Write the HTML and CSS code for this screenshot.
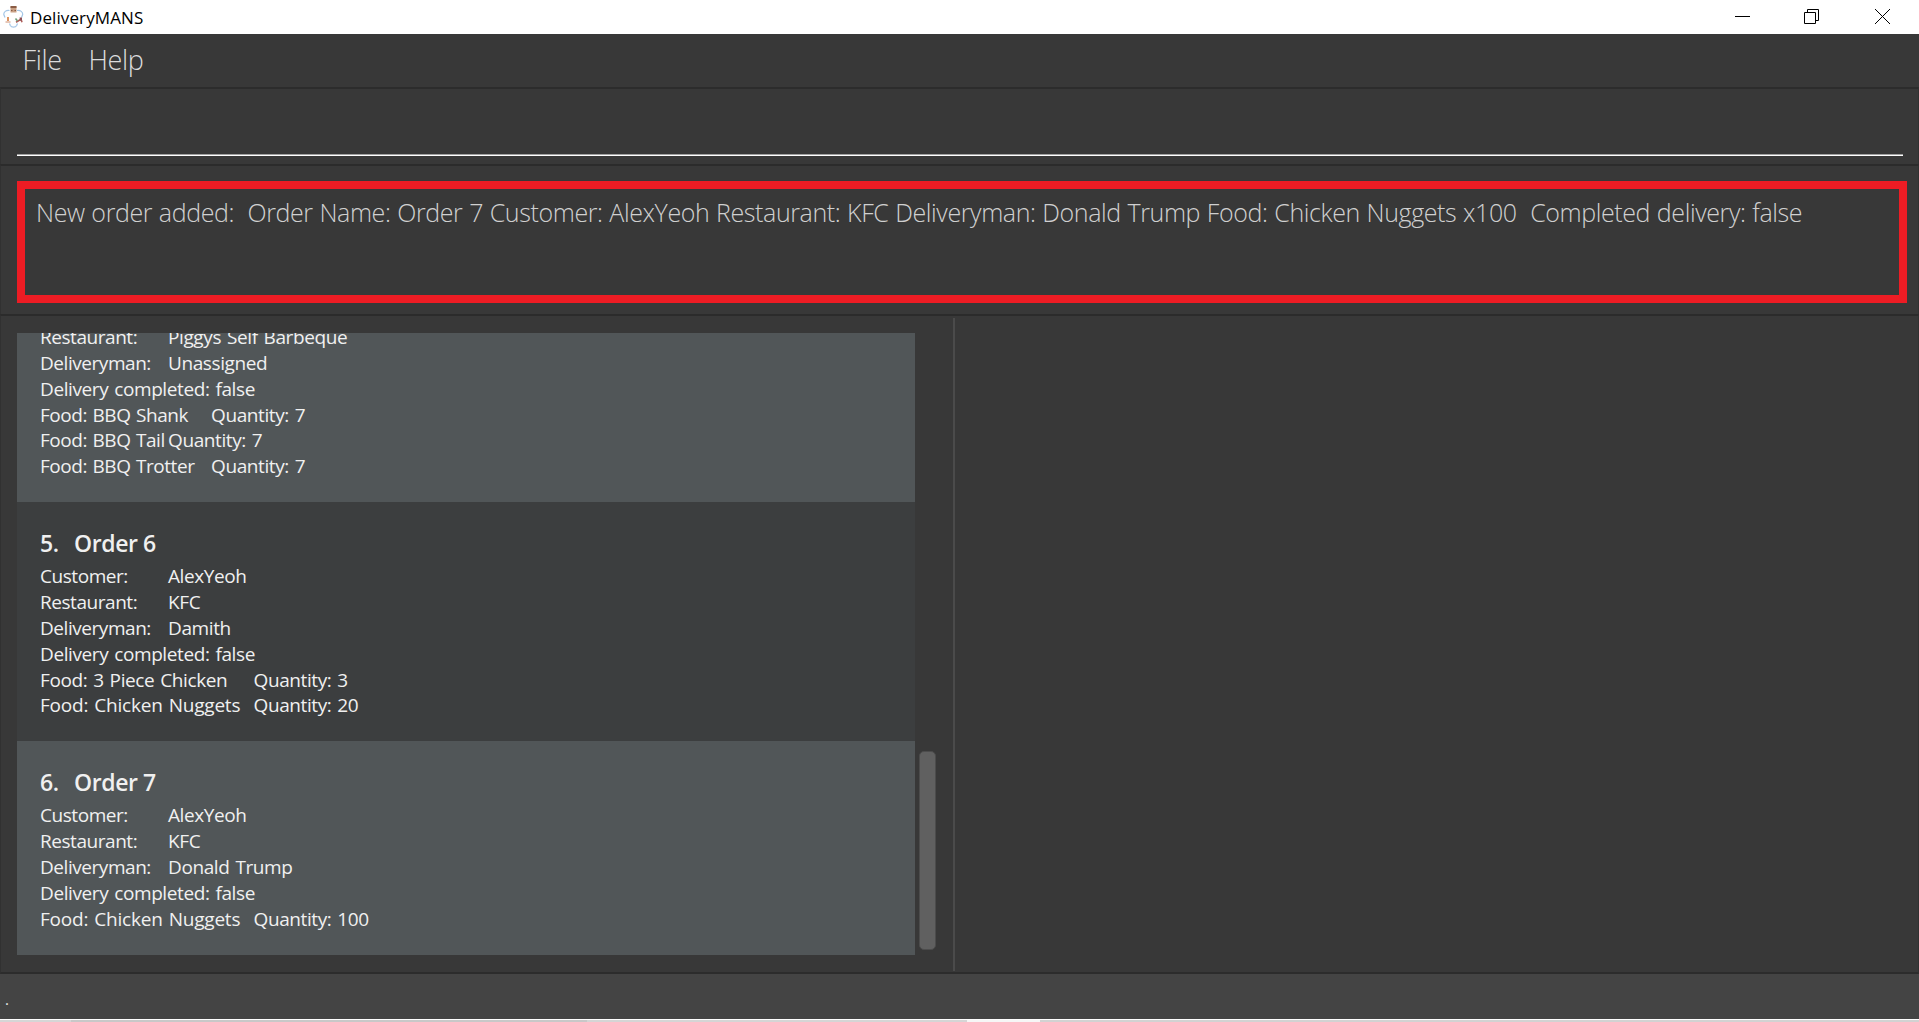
FILE: index.html
```html
<!DOCTYPE html>
<html lang="en">
<head>
<meta charset="utf-8">
<title>DeliveryMANS</title>
<link rel="stylesheet" href="styles.css">
</head>
<body>
<div class="window">
  <header class="titlebar">
    <svg class="app-icon" width="27" height="34" viewBox="0 0 27 34" fill="none">
      <path d="M9.500 10.500C6 10 3.500 12 3.800 14.500L5 17.500M17 10.500c3.500-.5 6 1.500 5.700 4L21.500 17.500M9.500 23.500l.8 2c1.200 2.200 5.200 2.200 6.400 0l.8-2" stroke="#a4c6e6" stroke-width="1.200"/>
      <path d="M10.500 6.500h6v6h-6z" fill="#c9a084"/>
      <path d="M10.500 6h6v2h-6zM11 10h1.500v1H11zM14.500 10H16v1h-1.500z" fill="#8a5c45"/>
      <path d="M7 17h2v4H7z" fill="#dc9462"/>
      <path d="M5.500 22h5" stroke="#d9a992" stroke-width="1.300"/>
      <path d="M16 22.300l5-3 1 3" stroke="#b0605c" stroke-width="1.600"/>
      <path d="M15.500 18.500l2 2.500" stroke="#6f9f78" stroke-width="1.600"/>
      <path d="M19.500 17.500H22v3h-2z" fill="#8c5058"/>
    </svg>
    <span class="app-name">DeliveryMANS</span>
    <svg class="controls" width="150" height="34" viewBox="0 0 150 34" fill="none" stroke="#000">
      <path d="M0 16.500h15"/>
      <path d="M69.500 12.500h11v11h-11zM72.500 12V9.500h11v11H81"/>
      <path d="M140 9l15 15M155 9l-15 15"/>
    </svg>
  </header>
  <nav class="menubar"><span class="menu file">File</span><span class="menu help">Help</span></nav>
  <section class="command"><div class="command-line"></div></section>
  <section class="result"><div class="result-box"><span class="result-text">New order added:&nbsp; Order Name: Order 7 Customer: AlexYeoh Restaurant: KFC Deliveryman: Donald Trump Food: Chicken Nuggets x100&nbsp; Completed delivery: false</span></div></section>
  <main class="content">
    <div class="list-pane">
      <div class="list">
        <article class="card first">
          <p><span class="t3">Restaurant:</span>Piggys Self Barbeque</p>
          <p><span class="t3">Deliveryman:</span>Unassigned</p>
          <p>Delivery completed: false</p>
          <p><span class="t4">Food: BBQ Shank</span>Quantity: 7</p>
          <p class="tight"><span class="t3">Food: BBQ Tail</span>Quantity: 7</p>
          <p><span class="t4">Food: BBQ Trotter</span>Quantity: 7</p>
        </article>
        <article class="card odd">
          <h2><span class="num">5.</span>Order 6</h2>
          <p><span class="t3">Customer:</span>AlexYeoh</p>
          <p><span class="t3">Restaurant:</span>KFC</p>
          <p><span class="t3">Deliveryman:</span>Damith</p>
          <p>Delivery completed: false</p>
          <p><span class="t5 narrow">Food: 3 Piece Chicken</span>Quantity: 3</p>
          <p class="tight"><span class="t5">Food: Chicken Nuggets</span>Quantity: 20</p>
        </article>
        <article class="card last">
          <h2><span class="num">6.</span>Order 7</h2>
          <p><span class="t3">Customer:</span>AlexYeoh</p>
          <p><span class="t3">Restaurant:</span>KFC</p>
          <p><span class="t3">Deliveryman:</span>Donald Trump</p>
          <p>Delivery completed: false</p>
          <p><span class="t5">Food: Chicken Nuggets</span>Quantity: 100</p>
        </article>
      </div>
      <div class="scrollbar"><div class="thumb"></div></div>
    </div>
    <div class="divider"></div>
    <div class="detail-pane"></div>
  </main>
  <footer class="status"><span class="path">.</span></footer>
  <div class="desktop-edge"></div>
</div>
</body>
</html>
```
FILE: styles.css
```css
* { box-sizing: border-box; margin: 0; padding: 0; }

body {
  width: 1919px;
  height: 1022px;
  overflow: hidden;
  font-family: "Open Sans", "Noto Sans", sans-serif;
  background: #383838;
}

.window { display: flex; flex-direction: column; height: 1022px; }

.titlebar {
  display: flex;
  align-items: center;
  height: 34px;
  background: #fff;
  color: #000;
}
.app-name { margin-left: 3px; font-size: 17px; letter-spacing: 0.1px; white-space: nowrap; }
.controls { margin-left: auto; margin-right: 34px; overflow: visible; }

.menubar {
  display: flex;
  height: 53px;
  padding: 8px 0 0 22.600px;
  color: #dcdcdc;
  font-size: 27px;
  font-weight: 300;
  line-height: 36px;
}
.menu { letter-spacing: -0.4px; }
.file { width: 66px; }

.command {
  height: 77px;
  padding: 65px 15px 0 16px;
  border: 1px solid #313131;
  border-top: 2px solid #2c2c2c;
  border-bottom: 0;
}
.command-line { height: 2px; background: linear-gradient(#a0a0a0 50%, #fff 50%); }

.result {
  height: 150px;
  padding: 15px 11px 0 16px;
  border: 1px solid #313131;
  border-top: 2px solid #2b2b2b;
  border-bottom: 0;
}
.result-box {
  height: 122px;
  padding: 6px 11px;
  border: 8px solid #ed1c24;
  color: #d0d0d0;
  font-size: 25px;
  font-weight: 300;
  line-height: 34px;
  white-space: nowrap;
}
.result-text { letter-spacing: -0.4px; word-spacing: 0.65px; }

.content {
  display: flex;
  height: 660px;
  padding-top: 2px;
  border: 1px solid #313131;
  border-top: 2px solid #2b2b2b;
  border-bottom: 2px solid #2c2c2c;
}
.list-pane { display: flex; width: 952px; padding: 15px 0 0 16px; }
.list { width: 898px; height: 622px; overflow: hidden; }

.card {
  padding: 24px 23px 0;
  background: #515658;
  color: #f0f0f0;
  font-size: 19px;
  line-height: 26px;
  letter-spacing: -0.4px;
  word-spacing: 1.4px;
  white-space: nowrap;
}
.first { display: flow-root; height: 169px; padding-top: 0; }
.first p:first-child { margin-top: -9px; }
.odd { height: 239px; background: #3c3e3f; }
.last { height: 214px; }
.card p { height: 26px; }
.card .tight { margin-top: -1px; }
.card h2 {
  height: 37px;
  font-size: 23px;
  font-weight: 600;
  line-height: 34px;
  word-spacing: 0;
}
.t3, .t4, .t5, .num { display: inline-block; }
.num { width: 34px; }
.t3, .t4 { letter-spacing: -0.45px; word-spacing: 1px; }
.t3 { width: 128px; }
.t4 { width: 171px; }
.t5 { width: 213.500px; letter-spacing: -0.22px; }
.narrow { letter-spacing: -0.4px; }

.scrollbar { width: 21px; padding: 418px 0 0 4px; }
.thumb { width: 17px; height: 199px; border: 1px solid #4c4c4c; border-radius: 5px; background: #606060; }
.divider { width: 2px; height: 653px; background: #4b4b4b; }
.detail-pane { flex: 1; }

.status { height: 45px; padding: 15px 0 0 5px; background: #444; color: #e8e8e8; }
.path { display: block; font-size: 15px; line-height: 20px; }
.desktop-edge {
  height: 3px;
  border-top: 1px solid #fff;
  background: linear-gradient(90deg, #d6d6d6 71px, #c8c8c8 71px 587px, #d5d5d5 587px 967px, #f6f6f6 967px 1040px, #d2d2d2 1040px);
}
```
